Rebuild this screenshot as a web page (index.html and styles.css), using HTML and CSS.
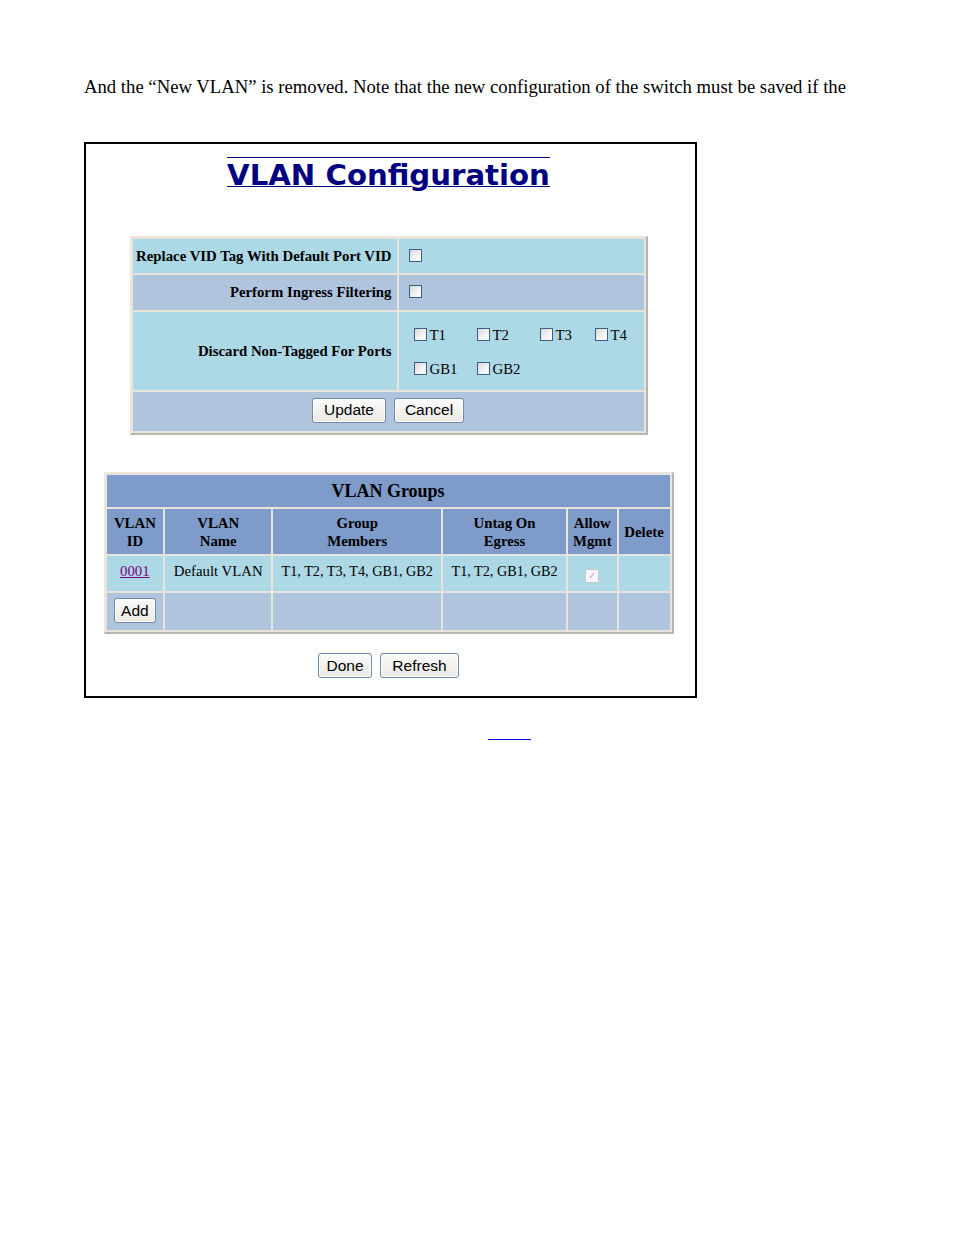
FILE: index.html
```html
<!DOCTYPE html>
<html>
<head>
<meta charset="utf-8">
<title>VLAN Configuration</title>
<link rel="stylesheet" href="styles.css">
</head>
<body>
<p class="intro">And the “New VLAN” is removed. Note that the new configuration of the switch must be saved if the</p>
<div class="frame">
  <div class="title-wrap"><span class="title">VLAN Configuration</span></div>

  <table class="cfg">
    <tr class="r1">
      <td class="lab">Replace VID Tag With Default Port VID</td>
      <td class="val"><span class="cb"></span></td>
    </tr>
    <tr class="r2">
      <td class="lab">Perform Ingress Filtering</td>
      <td class="val"><span class="cb"></span></td>
    </tr>
    <tr class="r3">
      <td class="lab">Discard Non-Tagged For Ports</td>
      <td class="val">
        <div class="ports">
          <span class="port"><span class="cb"></span>T1</span>
          <span class="port"><span class="cb"></span>T2</span>
          <span class="port"><span class="cb"></span>T3</span>
          <span class="port"><span class="cb"></span>T4</span>
          <span class="port"><span class="cb"></span>GB1</span>
          <span class="port"><span class="cb"></span>GB2</span>
        </div>
      </td>
    </tr>
    <tr class="r4">
      <td colspan="2" class="btns"><button class="btn b-update">Update</button><button class="btn b-cancel">Cancel</button></td>
    </tr>
  </table>

  <table class="grp">
    <tr class="g-title"><td colspan="6">VLAN Groups</td></tr>
    <tr class="g-head">
      <td class="c1">VLAN<br>ID</td>
      <td class="c2">VLAN<br>Name</td>
      <td class="c3">Group<br>Members</td>
      <td class="c4">Untag On<br>Egress</td>
      <td class="c5">Allow<br>Mgmt</td>
      <td class="c6">Delete</td>
    </tr>
    <tr class="g-data">
      <td><a class="vid" href="#">0001</a></td>
      <td>Default VLAN</td>
      <td class="narrow">T1, T2, T3, T4, GB1, GB2</td>
      <td class="narrow">T1, T2, GB1, GB2</td>
      <td><span class="cb-dis">&#10003;</span></td>
      <td></td>
    </tr>
    <tr class="g-add">
      <td class="addcell"><button class="btn add">Add</button></td>
      <td></td><td></td><td></td><td></td><td></td>
    </tr>
  </table>

  <div class="bottom-btns"><button class="btn b-done">Done</button><button class="btn b-refresh">Refresh</button></div>
</div>
<div class="foot"><span class="footline"></span></div>
</body>
</html>
```

FILE: styles.css
```css
html, body {
  margin: 0;
  padding: 0;
  background: #ffffff;
}
body {
  font-family: "Liberation Serif", "Times New Roman", serif;
  color: #000;
}
.intro {
  margin: 77px 0 0 84px;
  font-size: 18.7px;
  line-height: 20px;
  white-space: nowrap;
}
.frame {
  margin: 45px 0 0 84px;
  width: 605px;
  padding-right: 4px;
  height: 552px;
  border: 2px solid #000;
  display: flex;
  flex-direction: column;
  align-items: center;
}
.title-wrap {
  margin-top: 13px;
  height: 40px;
}
.title {
  font-family: "DejaVu Sans", Verdana, sans-serif;
  font-weight: bold;
  font-size: 29.2px;
  line-height: 36px;
  color: #000080;
  text-decoration: underline overline;
  text-decoration-thickness: 1px;
}
table {
  border-collapse: separate;
  border-spacing: 2px;
  background: #e7e4dc;
  border-style: solid;
  border-width: 1px 2px 2px 1px;
  border-color: #ebe8e0 #b8b5ad #b8b5ad #ebe8e0;
  font-family: "Liberation Serif", "Times New Roman", serif;
}
td {
  padding: 0;
}
.cfg {
  margin-top: 39px;
  width: 518px;
  font-size: 14.8px;
}
.cfg .lab {
  width: 264px;
  text-align: right;
  font-weight: bold;
  padding-right: 5px;
  box-sizing: border-box;
}
.cfg .val {
  padding-left: 10px;
}
.r1 td { height: 34px; background: #add8e6; }
.r2 td { height: 35px; background: #b0c4de; }
.r3 td { height: 78px; background: #add8e6; }
.r4 td { height: 39px; background: #b0c4de; }
.cb {
  display: inline-block;
  width: 11px;
  height: 11px;
  border: 1px solid #3b5f86;
  background: linear-gradient(135deg, #d8d8d8 0%, #f4f4f4 60%, #ffffff 100%);
  vertical-align: -1px;
}
.ports {
  display: grid;
  grid-template-columns: 63px 63px 55px auto;
  row-gap: 17px;
  padding-left: 5px;
  padding-top: 2px;
}
.port {
  font-size: 14.8px;
  line-height: 17px;
  white-space: nowrap;
}
.port .cb {
  margin-right: 3px;
}
.btns {
  text-align: center;
  padding-bottom: 3px;
  box-sizing: border-box;
}
.btn {
  font-family: "Liberation Sans", Arial, sans-serif;
  font-size: 15.5px;
  color: #000;
  height: 25px;
  padding: 0;
  margin: 0 4px;
  border: 1px solid #6f89a8;
  border-radius: 3px;
  background: linear-gradient(#fbfbfa, #e9e8e3);
  box-shadow: inset 0 0 0 1px #ffffff;
  line-height: 22px;
}
.b-update { width: 74px; }
.b-cancel { width: 70px; }
.b-done { width: 54px; }
.b-refresh { width: 79px; }
.grp {
  margin-top: 37px;
  width: 570px;
  font-size: 14.8px;
  text-align: center;
}
.g-title td {
  height: 32px;
  background: #7f9bc9;
  font-weight: bold;
  font-size: 18px;
}
.g-head td {
  height: 45px;
  background: #7f9bc9;
  font-weight: bold;
  font-size: 14.8px;
  line-height: 18px;
}
.c1 { width: 57px; }
.c2 { width: 107px; }
.c3 { width: 170px; }
.c4 { width: 124px; }
.c5 { width: 49px; }
.c6 { width: 51px; }
.g-data td {
  height: 35px;
  background: #add8e6;
  vertical-align: middle;
  padding-bottom: 4px;
  box-sizing: border-box;
}
.g-data td.narrow {
  font-size: 14.2px;
}
.g-add td {
  height: 37px;
  background: #b0c4de;
}
.vid {
  color: #800080;
}
.cb-dis {
  display: inline-block;
  width: 12px;
  height: 12px;
  border: 1px solid #c8c8c8;
  background: #f6f6f6;
  color: #b8b8b8;
  font-family: "DejaVu Sans", sans-serif;
  font-size: 10px;
  line-height: 12px;
  text-align: center;
  vertical-align: -6px;
}
.btn.add {
  width: 42px;
  margin: 0;
}
.addcell {
  padding-bottom: 2px;
  box-sizing: border-box;
}
.bottom-btns {
  margin-top: 19px;
}
.foot {
  margin: 41px 0 0 488px;
  height: 2px;
}
.footline {
  display: block;
  width: 43px;
  height: 1px;
  background: #0000ff;
}
```
